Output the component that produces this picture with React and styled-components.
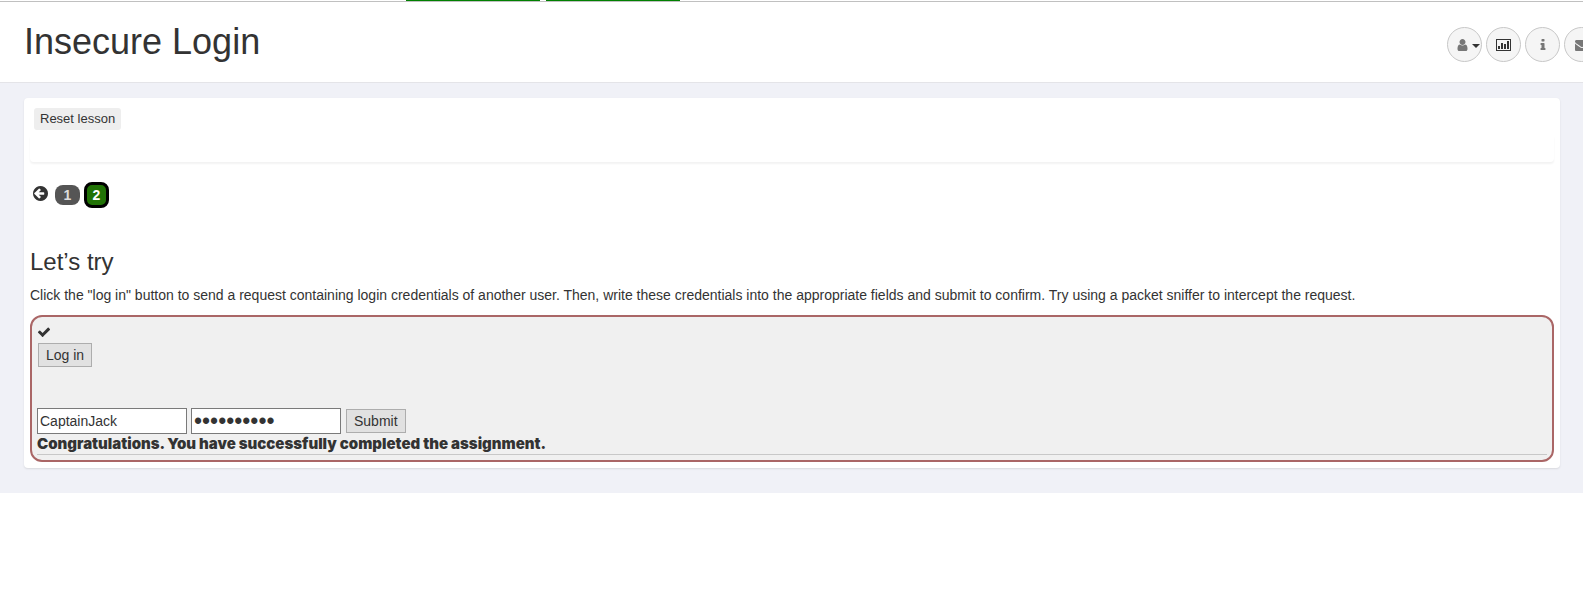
import styled, { createGlobalStyle } from "styled-components";

const paths = {
	user: "M1280 1399q0 109-62.5 187t-150.5 78h-854q-88 0-150.5-78t-62.5-187q0-85 8.5-160.5t31.5-152 58.5-131 94-89 134.5-34.5q131 128 313 128t313-128q76 0 134.5 34.5t94 89 58.5 131 31.5 152 8.5 160.5zm-256-887q0 159-112.5 271.5t-271.5 112.5-271.5-112.5-112.5-271.5 112.5-271.5 271.5-112.5 271.5 112.5 112.5 271.5z",
	info: "M1216 1344v128q0 26-19 45t-45 19h-512q-26 0-45-19t-19-45v-128q0-26 19-45t45-19h64v-384h-64q-26 0-45-19t-19-45v-128q0-26 19-45t45-19h384q26 0 45 19t19 45v576h64q26 0 45 19t19 45zm-128-1152v192q0 26-19 45t-45 19h-256q-26 0-45-19t-19-45v-192q0-26 19-45t45-19h256q26 0 45 19t19 45z",
	mail: "M1792 710v794q0 66-47 113t-113 47h-1472q-66 0-113-47t-47-113v-794q44 49 101 87 362 246 497 345 57 42 92.5 65.5t94.5 48 110 24.5h2q51 0 110-24.5t94.5-48 92.5-65.5q170-123 498-345 57-39 100-87zm0-294q0 79-49 151t-122 123q-376 261-468 325-10 7-42.5 31t-54 38.5-52 32.5-57.5 27-50 9h-2q-23 0-50-9t-57.5-27-52-32.5-54-38.5-42.5-31q-91-64-262-182.5t-205-142.5q-62-42-117-115.5t-55-136.5q0-78 41.5-130t118.5-52h1472q65 0 112.5 47t47.5 113z",
	check: "M1671 566q0 40-28 68l-724 724-136 136q-28 28-68 28t-68-28l-136-136-362-362q-28-28-28-68t28-68l136-136q28-28 68-28t68 28l294 295 656-657q28-28 68-28t68 28l136 136q28 28 28 68z",
	back: "M1280 960v-128q0-26-19-45t-45-19h-502l189-189q19-19 19-45t-19-45l-91-91q-18-18-45-18t-45 18l-362 362-91 91q-18 18-18 45t18 45l91 91 362 362q18 18 45 18t45-18l91-91q18-18 18-45t-18-45l-189-189h502q26 0 45-19t19-45zm384-64q0 209-103 385.5t-279.5 279.5-385.5 103-385.5-103-279.5-279.5-103-385.5 103-385.5 279.5-279.5 385.5-103 385.5 103 279.5 279.5 103 385.5z",
};

const Icon = ({ name, width = 14, height = 14, viewBox = "0 0 1792 1792" }) => (
	<svg width={width} height={height} viewBox={viewBox} fill="currentColor" aria-hidden="true">
		<path d={paths[name]} />
	</svg>
);

const BarChartIcon = () => (
	<svg width="15" height="12" viewBox="0 0 15 12" shapeRendering="crispEdges" aria-hidden="true">
		<rect x="0.5" y="0.5" width="14" height="11" fill="none" stroke="#333" />
		<path d="M2 7h2v3H2zM5 4h2v6H5zM8 5h2v5H8zM11 2h2v8h-2z" fill="#333" />
	</svg>
);

const toolbarItems = [
	{ id: "report", label: "Report card", icon: <BarChartIcon /> },
	{ id: "info", label: "About", icon: <Icon name="info" /> },
	{ id: "mail", label: "Contact", icon: <Icon name="mail" /> },
];

const App = () => {
	return (
		<>
			<GlobalStyle />
			<TopEdge>
				<Tab />
				<Tab />
			</TopEdge>
			<Header>
				<h1>Insecure Login</h1>
				<Toolbar>
					<RoundButton aria-label="User menu">
						<Icon name="user" width={11} viewBox="0 0 1280 1792" />
						<Caret />
					</RoundButton>
					{toolbarItems.map((item) => (
						<RoundButton key={item.id} aria-label={item.label}>
							{item.icon}
						</RoundButton>
					))}
				</Toolbar>
			</Header>
			<Content>
				<Panel>
					<LessonControls>
						<ResetButton>Reset lesson</ResetButton>
					</LessonControls>
					<HintBox />
					<Pager aria-label="Lesson pages">
						<PageArrow href="#1" aria-label="Previous page">
							<Icon name="back" width={15} height={15} viewBox="128 128 1536 1536" />
						</PageArrow>
						<PageLink href="#1">1</PageLink>
						<PageLink href="#2" $current>
							2
						</PageLink>
					</Pager>
					<LessonTitle>Let’s try</LessonTitle>
					<LessonText>
						Click the "log in" button to send a request containing login credentials of another user. Then, write
						these credentials into the appropriate fields and submit to confirm. Try using a packet sniffer to
						intercept the request.
					</LessonText>
					<Assignment>
						<Done>
							<Icon name="check" />
						</Done>
						<FormButton type="button">Log in</FormButton>
						<LoginForm onSubmit={(e) => e.preventDefault()}>
							<Field type="text" aria-label="Username" defaultValue="CaptainJack" />
							<Field type="password" aria-label="Password" defaultValue="BlackPearl" />
							<FormButton type="submit">Submit</FormButton>
						</LoginForm>
						<Feedback>Congratulations. You have successfully completed the assignment.</Feedback>
					</Assignment>
				</Panel>
			</Content>
		</>
	);
};

export default App;

const GlobalStyle = createGlobalStyle`
	* {
		box-sizing: border-box;
	}

	body {
		margin: 0;
		overflow-x: hidden;
		background-color: white;
		color: #333;
		font-family: "Liberation Sans", Arial, sans-serif;
		font-size: 14px;
		line-height: 20px;
	}

	button,
	input {
		color: inherit;
		font: inherit;
	}
`;

const TopEdge = styled.div`
	display: flex;
	gap: 6px;
	height: 2px;
	padding-left: 406px;
	border-bottom: 1px solid #c0c0c0;
`;

const Tab = styled.span`
	width: 134px;
	background-color: #008000;
`;

const Header = styled.header`
	display: flex;
	justify-content: space-between;
	height: 81px;
	padding-left: 24px;
	overflow: hidden;
	border-bottom: 1px solid #e4e4e8;

	h1 {
		margin: 20px 0 0;
		font-size: 36px;
		font-weight: 400;
		line-height: 40px;
	}
`;

const Toolbar = styled.div`
	display: flex;
	gap: 4px;
	margin: 25px -16px 0 0;
`;

const RoundButton = styled.button`
	display: flex;
	flex-shrink: 0;
	align-items: center;
	justify-content: center;
	width: 35px;
	height: 35px;
	padding: 0;
	border: 1px solid #c8c8c8;
	border-radius: 50%;
	background-color: #f5f5f5;
	color: #777;
	cursor: pointer;
`;

const Caret = styled.span`
	margin: 2px -7px 0 4px;
	border-top: 4px solid #333;
	border-right: 4px solid transparent;
	border-left: 4px solid transparent;
`;

const Content = styled.main`
	padding: 15px 23px 25px 24px;
	background-color: #f0f1f7;
`;

const Panel = styled.section`
	padding: 6px;
	border-radius: 4px;
	background-color: white;
	box-shadow: 0 1px 2px rgb(0 0 0 / 10%);
`;

const LessonControls = styled.div`
	padding: 4px;
`;

const HintBox = styled.div`
	height: 28px;
	border-radius: 4px;
	box-shadow: 0 2px 2px rgb(0 0 0 / 5%);
`;

const ResetButton = styled.button`
	display: block;
	height: 22px;
	padding: 0 6px;
	border: none;
	border-radius: 3px;
	background-color: #eee;
	font-size: 13px;
	cursor: pointer;
`;

const Pager = styled.nav`
	display: flex;
	align-items: center;
	gap: 4px;
	margin-top: 20px;
	padding-left: 3px;
`;

const PageArrow = styled.a`
	display: flex;
	margin: 0 3px 3px 0;
	color: #333;
`;

const PageLink = styled.a`
	width: 25px;
	border: ${({ $current }) => ($current ? "3px solid black" : "none")};
	border-radius: 8px;
	background-color: ${({ $current }) => ($current ? "#217306" : "#555")};
	color: ${({ $current }) => ($current ? "white" : "#ddd")};
	font-size: 14px;
	font-weight: 700;
	text-align: center;
	text-decoration: none;
`;

const LessonTitle = styled.h2`
	margin: 40px 0 0;
	font-size: 24px;
	font-weight: 400;
	line-height: 28px;
`;

const LessonText = styled.p`
	margin: 9px 0 10px;
`;

const Assignment = styled.div`
	padding: 5px;
	border: 2px solid #a66;
	border-radius: 12px;
	background-color: #f0f0f0;
`;

const Done = styled.div`
	display: flex;
	align-items: center;
	height: 21px;
	padding-bottom: 2px;
`;

const FormButton = styled.button`
	height: 24px;
	margin: 0 1px;
	padding: 0 7px;
	border: 1px solid #adadad;
	background-color: #e1e1e1;
	line-height: 20px;
	cursor: pointer;
`;

const LoginForm = styled.form`
	display: flex;
	align-items: center;
	gap: 4px;
	margin-top: 41px;
`;

const Field = styled.input`
	width: 150px;
	height: 26px;
	padding: 0 2px;
	border: 1px solid #7a7a7a;
	background-color: white;

	&[type="password"] {
		font-size: 23px;
	}
`;

const Feedback = styled.div`
	border-bottom: 1px solid #c8c8c8;
	font-family: Inter, "Arial Black", sans-serif;
	font-size: 15px;
	font-weight: 900;
`;
